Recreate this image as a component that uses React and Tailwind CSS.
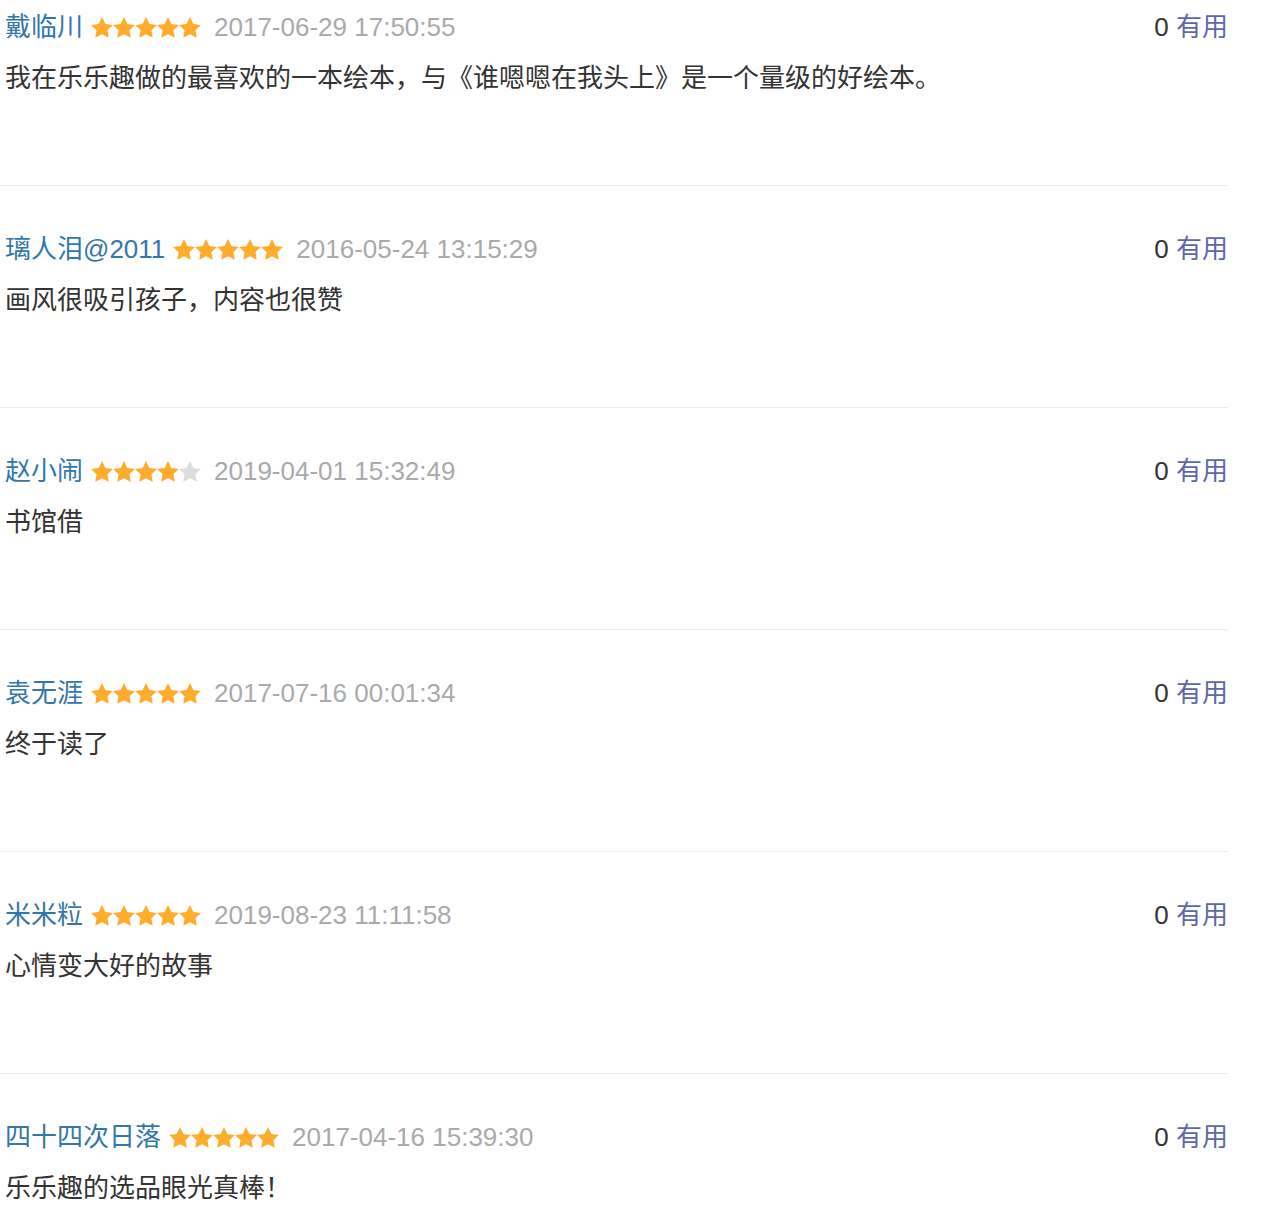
import React from 'react';

const REVIEWS = [
  { name: '戴临川', stars: 5, time: '2017-06-29 17:50:55', text: '我在乐乐趣做的最喜欢的一本绘本，与《谁嗯嗯在我头上》是一个量级的好绘本。' },
  { name: '璃人泪@2011', stars: 5, time: '2016-05-24 13:15:29', text: '画风很吸引孩子，内容也很赞' },
  { name: '赵小闹', stars: 4, time: '2019-04-01 15:32:49', text: '书馆借' },
  { name: '袁无涯', stars: 5, time: '2017-07-16 00:01:34', text: '终于读了' },
  { name: '米米粒', stars: 5, time: '2019-08-23 11:11:58', text: '心情变大好的故事' },
  { name: '四十四次日落', stars: 5, time: '2017-04-16 15:39:30', text: '乐乐趣的选品眼光真棒！' },
];

function Star({ on }) {
  return (
    <svg viewBox="0.5 0 23 21.8" className="w-[22px] h-[21px] block">
      <path
        d="M12 0L15.53 7.15L23.41 8.29L17.71 13.85L19.05 21.71L12 18L4.95 21.71L6.29 13.85L0.59 8.29L8.47 7.15Z"
        fill={on ? '#ffac2d' : '#dcdcdc'}
      />
    </svg>
  );
}

function Stars({ count }) {
  return (
    <span className="flex items-center">
      {[1, 2, 3, 4, 5].map(i => (
        <Star key={i} on={i <= count} />
      ))}
    </span>
  );
}

function ReviewItem({ review, first }) {
  return (
    <div className={`border-b border-[#ebebeb] pb-[87px] ${first ? 'pt-[7px]' : 'pt-[43px]'}`}>
      <div className="flex items-center h-[40px]">
        <a className="text-[#3377aa] pl-[5px]">{review.name}</a>
        <span className="ml-[8px]"><Stars count={review.stars} /></span>
        <span className="ml-[13px] text-[#aaaaaa]">{review.time}</span>
        <span className="ml-auto text-[#333333]">
          0 <span className="text-[#5d68a8]">有用</span>
        </span>
      </div>
      <p className="mt-[11px] h-[40px] leading-[40px] pl-[5px] text-[#333333]">{review.text}</p>
    </div>
  );
}

export default function App() {
  return (
    <div
      className="w-[1228px] bg-white text-[26px] leading-[40px]"
      style={{ fontFamily: '"Liberation Sans", "Noto Sans CJK SC", sans-serif' }}
    >
      {REVIEWS.map((r, i) => (
        <ReviewItem key={i} review={r} first={i === 0} />
      ))}
    </div>
  );
}
